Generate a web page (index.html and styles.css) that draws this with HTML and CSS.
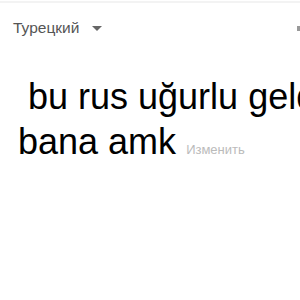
FILE: index.html
```html
<!DOCTYPE html>
<html>
<head>
<meta charset="utf-8">
<link rel="stylesheet" href="styles.css">
</head>
<body>
<div class="page">
  <div class="topline"></div>
  <div class="header">
    <div class="lang">Турецкий <span class="caret"></span></div>
    <div class="edge"></div>
  </div>
  <div class="result"><span class="txt">&nbsp;bu rus uğurlu geldi bana amk</span> <span class="edit">Изменить</span></div>
</div>
</body>
</html>
```
FILE: styles.css
```css
html, body {
  margin: 0;
  padding: 0;
  background: #fff;
  overflow: hidden;
  width: 300px;
  height: 300px;
}
.page {
  width: 300px;
  height: 300px;
  overflow: hidden;
  font-family: Arial, "Liberation Sans", sans-serif;
}
.topline {
  height: 2px;
  margin-top: 1px;
  background: #f3f3f3;
}
.header {
  display: flex;
  justify-content: space-between;
  align-items: center;
  height: 50px;
  padding-left: 13px;
}
.lang {
  font-size: 15.5px;
  color: #555;
  display: flex;
  align-items: center;
}
.caret {
  display: inline-block;
  width: 0;
  height: 0;
  margin-left: 13px;
  border-left: 5px solid transparent;
  border-right: 5px solid transparent;
  border-top: 5px solid #666;
}
.edge {
  width: 3px;
  height: 5px;
  background: #999;
}
.result {
  width: 360px;
  padding-left: 18px;
  padding-top: 21px;
  font-size: 36px;
  line-height: 45px;
  color: #000;
}
.edit {
  font-size: 13px;
  color: #bbb;
}
```
